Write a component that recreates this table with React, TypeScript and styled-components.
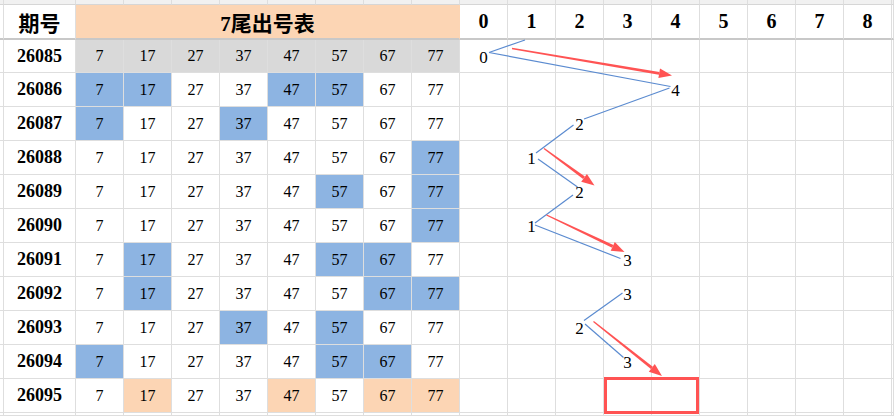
import React from 'react';
import styled, { createGlobalStyle } from 'styled-components';

const GRID = '#dedede';
const BLUE = '#8db4e2';
const GRAY = '#d9d9d9';
const PEACH = '#fcd5b4';
const RED = '#ff5353';
const LINE = '#5b8bd0';

const NUMBERS = [7, 17, 27, 37, 47, 57, 67, 77];
const DIGITS = [0, 1, 2, 3, 4, 5, 6, 7, 8];

interface Row {
  period: string;
  tone: string;
  marks: number[];
  hit?: number;
}

const rows: Row[] = [
  { period: '26085', tone: GRAY, marks: [0, 1, 2, 3, 4, 5, 6, 7], hit: 0 },
  { period: '26086', tone: BLUE, marks: [0, 1, 4, 5], hit: 4 },
  { period: '26087', tone: BLUE, marks: [0, 3], hit: 2 },
  { period: '26088', tone: BLUE, marks: [7], hit: 1 },
  { period: '26089', tone: BLUE, marks: [5, 7], hit: 2 },
  { period: '26090', tone: BLUE, marks: [7], hit: 1 },
  { period: '26091', tone: BLUE, marks: [1, 5, 6], hit: 3 },
  { period: '26092', tone: BLUE, marks: [1, 6, 7], hit: 3 },
  { period: '26093', tone: BLUE, marks: [3, 5], hit: 2 },
  { period: '26094', tone: BLUE, marks: [0, 5, 6], hit: 3 },
  { period: '26095', tone: PEACH, marks: [1, 4, 6, 7] },
];

// blue trend lines between the hit digits
const trend = [
  [489, 52.5, 525, 40],
  [489, 52.5, 670.5, 86.5],
  [669.5, 88, 584, 119],
  [573.5, 125, 536, 153],
  [538, 159, 577.5, 187],
  [573, 195, 535, 223],
  [535, 225, 620.5, 258.5],
  [622.5, 293, 584, 320.5],
  [585, 324, 623.5, 357.5],
];

// red arrows (from -> tip)
const arrows = [
  [512, 48.5, 672, 75.5],
  [544, 148.5, 594.5, 185.5],
  [546.5, 215, 624.5, 252],
  [593.5, 321.5, 662, 376],
];

const GlobalStyle = createGlobalStyle`
  html, body {
    margin: 0;
    padding: 0;
    background: #fff;
  }
`;

const Sheet = styled.div`
  position: relative;
  display: grid;
  grid-template-columns: 4px 72px repeat(17, 48px) 1fr;
  grid-template-rows: 5px 35px 33px repeat(10, 34px) 1fr;
  width: 894px;
  height: 416px;
  overflow: hidden;
  background: #fff;
`;

const Cell = styled.div<{ $bg?: string }>`
  box-sizing: border-box;
  display: flex;
  align-items: center;
  justify-content: center;
  overflow: hidden;
  background: ${(p) => p.$bg || '#fff'};
  border-right: 1px solid ${GRID};
  border-bottom: 1px solid ${GRID};
  font-family: "Liberation Serif", "DejaVu Serif", serif;
  font-size: 16px;
  color: #000;
`;

const TopCell = styled(Cell)`
  background: #f1f1f1;
  border-bottom-color: #d6d6d6;
`;

const HeadCell = styled(Cell)`
  border-bottom: 2px solid #c8c8c8;
  font-size: 20px;
  font-weight: bold;
`;

const TitleCell = styled(HeadCell)<{ $span: number }>`
  grid-column: span ${(p) => p.$span};
  background: ${PEACH};
  border-right-color: ${PEACH};
  font-family: "Liberation Serif", "Noto Sans CJK SC", sans-serif;
  font-size: 21px;
`;

const LabelCell = styled(HeadCell)`
  font-family: "Noto Sans CJK SC", sans-serif;
  font-size: 21px;
`;

const PeriodCell = styled(Cell)`
  font-size: 18px;
  font-weight: bold;
`;

const ChartCell = styled(Cell)`
  padding-top: 3px;
  font-size: 17px;
`;

const EdgeCell = styled(Cell)`
  border-bottom-color: ${GRID};
`;

const Overlay = styled.svg`
  position: absolute;
  left: 0;
  top: 0;
  width: 894px;
  height: 416px;
  pointer-events: none;
`;

const arrowShape = (x1: number, y1: number, x2: number, y2: number) => {
  const dx = x2 - x1;
  const dy = y2 - y1;
  const len = Math.hypot(dx, dy);
  const ux = dx / len;
  const uy = dy / len;
  const nx = -uy;
  const ny = ux;
  const head = 13;
  const hw = 4.8;
  const bx = x2 - ux * head;
  const by = y2 - uy * head;
  const pt = (x: number, y: number) => `${x.toFixed(1)},${y.toFixed(1)}`;
  const shaft = [
    pt(x1 + nx * 0.7, y1 + ny * 0.7),
    pt(bx + nx * 1.5, by + ny * 1.5),
    pt(bx - nx * 1.5, by - ny * 1.5),
    pt(x1 - nx * 0.7, y1 - ny * 0.7),
  ].join(' ');
  const tip = [pt(x2, y2), pt(bx + nx * hw, by + ny * hw), pt(bx - nx * hw, by - ny * hw)].join(' ');
  return { shaft, tip };
};

const App: React.FC = () => (
  <>
    <GlobalStyle />
    <Sheet>
      {/* partial row above the header */}
      {Array.from({ length: 20 }, (_, i) => (
        <TopCell key={`t${i}`} />
      ))}

      <HeadCell />
      <LabelCell>期号</LabelCell>
      <TitleCell $span={8}>7尾出号表</TitleCell>
      {DIGITS.map((d) => (
        <HeadCell key={`h${d}`}>{d}</HeadCell>
      ))}
      <HeadCell />

      {rows.map((row) => (
        <React.Fragment key={row.period}>
          <EdgeCell />
          <PeriodCell>{row.period}</PeriodCell>
          {NUMBERS.map((n, i) => (
            <Cell key={n} $bg={row.marks.includes(i) ? row.tone : undefined}>
              {n}
            </Cell>
          ))}
          {DIGITS.map((d) => (
            <ChartCell key={`c${d}`}>{row.hit === d ? d : ''}</ChartCell>
          ))}
          <EdgeCell />
        </React.Fragment>
      ))}

      {/* partial row below */}
      {Array.from({ length: 20 }, (_, i) => (
        <EdgeCell key={`b${i}`} />
      ))}

      <Overlay viewBox="0 0 894 416">
        {trend.map(([x1, y1, x2, y2], i) => (
          <line key={`l${i}`} x1={x1} y1={y1} x2={x2} y2={y2} stroke={LINE} strokeWidth={1.2} />
        ))}
        {arrows.map(([x1, y1, x2, y2], i) => {
          const a = arrowShape(x1, y1, x2, y2);
          return (
            <g key={`a${i}`} fill={RED}>
              <polygon points={a.shaft} />
              <polygon points={a.tip} />
            </g>
          );
        })}
        <rect x={605.5} y={378.5} width={92} height={34} fill="none" stroke={RED} strokeWidth={3} />
      </Overlay>
    </Sheet>
  </>
);

export default App;
